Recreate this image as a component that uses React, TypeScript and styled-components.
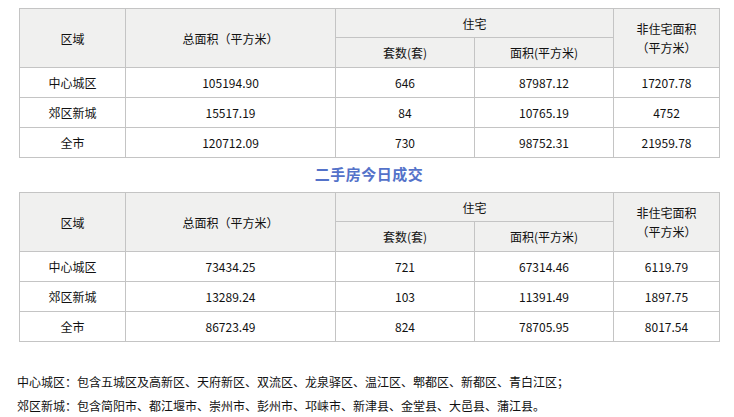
import React from 'react';
import styled, { createGlobalStyle } from 'styled-components';

const GlobalStyle = createGlobalStyle`
  body {
    margin: 0;
    background: #fff;
    font-family: "SimSun", "Noto Sans CJK SC", sans-serif;
    font-size: 12px;
    color: #111;
  }
`;

const Page = styled.div`
  padding: 8px 0 0 19px;
  width: 700px;
`;

const Table = styled.table`
  width: 700px;
  border-collapse: collapse;
  table-layout: fixed;
  border: 1px solid #c4c4c4;
`;

const Cell = styled.td<{ $head?: boolean; $short?: boolean }>`
  border: 1px solid #c4c4c4;
  text-align: center;
  vertical-align: middle;
  padding: 0;
  height: ${(p) => (p.$short ? '28px' : '29px')};
  background: ${(p) => (p.$head ? '#f0f0ef' : '#fff')};
  line-height: 19px;
`;

const Title = styled.div`
  height: 34px;
  line-height: 31px;
  text-align: center;
  color: #5472c9;
  font-size: 15px;
  font-weight: bold;
  letter-spacing: 0.5px;
`;

const Notes = styled.div`
  margin-top: 28px;
  margin-left: -2px;
  line-height: 24px;
`;

type Row = [string, string, string, string, string];

const newHouse: Row[] = [
  ['中心城区', '105194.90', '646', '87987.12', '17207.78'],
  ['郊区新城', '15517.19', '84', '10765.19', '4752'],
  ['全市', '120712.09', '730', '98752.31', '21959.78'],
];

const secondHand: Row[] = [
  ['中心城区', '73434.25', '721', '67314.46', '6119.79'],
  ['郊区新城', '13289.24', '103', '11391.49', '1897.75'],
  ['全市', '86723.49', '824', '78705.95', '8017.54'],
];

function DealTable({ rows }: { rows: Row[] }) {
  return (
    <Table>
      <colgroup>
        <col style={{ width: 106 }} />
        <col style={{ width: 210 }} />
        <col style={{ width: 139 }} />
        <col style={{ width: 139 }} />
        <col style={{ width: 106 }} />
      </colgroup>
      <tbody>
        <tr>
          <Cell $head rowSpan={2}>区域</Cell>
          <Cell $head rowSpan={2}>总面积（平方米）</Cell>
          <Cell $head $short colSpan={2}>住宅</Cell>
          <Cell $head rowSpan={2}>
            非住宅面积
            <br />
            （平方米）
          </Cell>
        </tr>
        <tr>
          <Cell $head>套数(套)</Cell>
          <Cell $head>面积(平方米)</Cell>
        </tr>
        {rows.map((r) => (
          <tr key={r[0]}>
            {r.map((v, i) => (
              <Cell key={i}>{v}</Cell>
            ))}
          </tr>
        ))}
      </tbody>
    </Table>
  );
}

export default function App() {
  return (
    <Page>
      <GlobalStyle />
      <DealTable rows={newHouse} />
      <Title>二手房今日成交</Title>
      <DealTable rows={secondHand} />
      <Notes>
        中心城区：包含五城区及高新区、天府新区、双流区、龙泉驿区、温江区、郫都区、新都区、青白江区；
        <br />
        郊区新城：包含简阳市、都江堰市、崇州市、彭州市、邛崃市、新津县、金堂县、大邑县、蒲江县。
      </Notes>
    </Page>
  );
}
